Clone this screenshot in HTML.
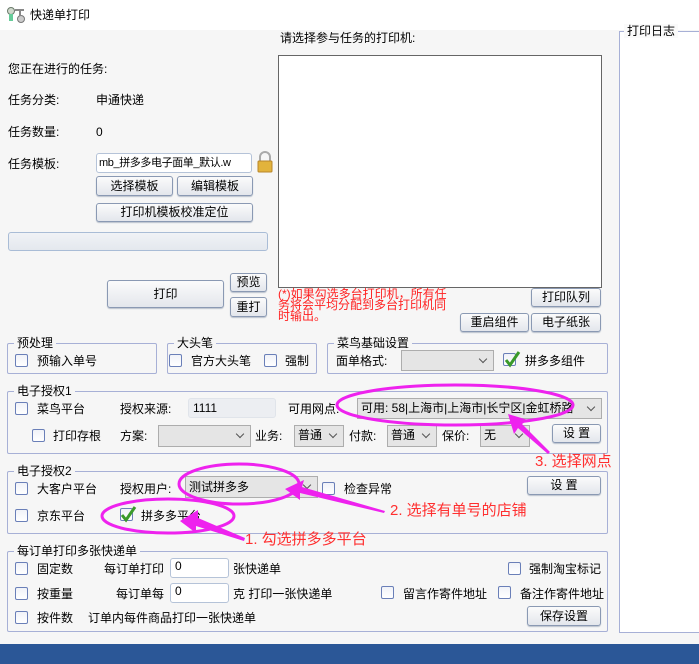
<!DOCTYPE html><html><head><meta charset="utf-8"><style>
*{box-sizing:border-box;margin:0;padding:0}
body{width:699px;height:664px;overflow:hidden;background:#f6f6f6;font-family:"Liberation Sans","Noto Sans CJK SC","WenQuanYi Zen Hei",sans-serif;font-size:12px;color:#000;position:relative}
.a{position:absolute;white-space:nowrap;line-height:14px}
.btn{position:absolute;border:1px solid #8a99b3;border-radius:3px;background:linear-gradient(#fbfbfb,#e3e6ec);text-align:center;font-size:12px;box-shadow:0 1px 1px #b8c0cc}
.gb{position:absolute;border:1px solid #a7b0d6;border-radius:2px}
.gb>span{position:absolute;top:-9px;left:6px;background:#f6f6f6;padding:0 3px;line-height:16px}
.cb{position:absolute;width:13px;height:13px;border:1px solid #6a7fb8;border-radius:2px;background:linear-gradient(#f0f2f8,#fff)}
.sel{position:absolute;border:1px solid #adadad;background:#e5e5e5;line-height:18px;padding-left:3px}
.sel:after{content:"";position:absolute;right:7px;top:5px;width:5px;height:5px;border-right:1px solid #555;border-bottom:1px solid #555;transform:rotate(45deg)}
.inp{position:absolute;background:#fff;border:1px solid #b5c3d8;border-radius:3px;padding-left:4px;line-height:16px}
.red{color:#ff2020}
</style></head><body>
<div style="position:absolute;left:0;top:0;width:699px;height:30px;background:#fff"></div>
<svg class="a" style="left:6px;top:6px" width="20" height="18"><circle cx="5" cy="5" r="3.5" fill="#cfd8cc" stroke="#6a7a6a"/><rect x="3" y="8" width="4" height="7" fill="#6c9"/><circle cx="15" cy="13" r="3.5" fill="#ccc" stroke="#777"/><rect x="9" y="3" width="9" height="2" fill="#888"/><rect x="13" y="3" width="2" height="7" fill="#888"/></svg>
<div class="a" style="left:30px;top:8px">快递单打印</div>
<div class="a" style="left:280px;top:31px">请选择参与任务的打印机:</div>
<div style="position:absolute;left:278px;top:55px;width:324px;height:233px;background:#fff;border:1px solid #666"></div>
<div class="a" style="left:8px;top:62px">您正在进行的任务:</div>
<div class="a" style="left:8px;top:93px">任务分类:</div><div class="a" style="left:96px;top:93px">申通快递</div>
<div class="a" style="left:8px;top:125px">任务数量:</div><div class="a" style="left:96px;top:125px">0</div>
<div class="a" style="left:8px;top:157px">任务模板:</div>
<div class="inp" style="left:96px;top:153px;width:156px;height:20px;line-height:18px;overflow:hidden;font-size:11px;letter-spacing:-0.4px;padding-left:2px">mb_拼多多电子面单_默认.w</div>
<svg class="a" style="left:256px;top:151px" width="18" height="22"><path d="M4 10V6a5 5 0 0 1 10 0v4" fill="none" stroke="#aaa" stroke-width="2"/><rect x="2" y="10" width="14" height="11" rx="1" fill="#e2b33c" stroke="#b8862a"/></svg>
<div class="btn" style="left:96px;top:176px;width:77px;height:20px;line-height:18px">选择模板</div>
<div class="btn" style="left:177px;top:176px;width:76px;height:20px;line-height:18px">编辑模板</div>
<div class="btn" style="left:96px;top:203px;width:157px;height:19px;line-height:17px">打印机模板校准定位</div>
<div style="position:absolute;left:8px;top:232px;width:260px;height:19px;border:1px solid #a9bcd6;border-radius:3px;background:linear-gradient(#f0f2f6,#e4e8ee)"></div>
<div class="btn" style="left:107px;top:280px;width:117px;height:28px;line-height:26px">打印</div>
<div class="btn" style="left:230px;top:273px;width:37px;height:19px;line-height:17px">预览</div>
<div class="btn" style="left:230px;top:297px;width:37px;height:20px;line-height:18px">重打</div>
<div class="a red" style="left:278px;top:289px;line-height:11px;font-size:12px">(*)如果勾选多台打印机，所有任<br>务将会平均分配到多台打印机同<br>时输出。</div>
<div class="btn" style="left:531px;top:288px;width:70px;height:19px;line-height:17px">打印队列</div>
<div class="btn" style="left:460px;top:313px;width:69px;height:19px;line-height:17px">重启组件</div>
<div class="btn" style="left:531px;top:313px;width:70px;height:19px;line-height:17px">电子纸张</div>

<div class="gb" style="left:7px;top:343px;width:150px;height:31px"><span>预处理</span></div>
<div class="cb" style="left:15px;top:354px"></div><div class="a" style="left:37px;top:354px">预输入单号</div>
<div class="gb" style="left:167px;top:343px;width:150px;height:31px"><span>大头笔</span></div>
<div class="cb" style="left:169px;top:354px"></div><div class="a" style="left:191px;top:354px">官方大头笔</div>
<div class="cb" style="left:264px;top:354px"></div><div class="a" style="left:285px;top:354px">强制</div>
<div class="gb" style="left:327px;top:343px;width:281px;height:31px"><span>菜鸟基础设置</span></div>
<div class="a" style="left:336px;top:354px">面单格式:</div>
<div class="sel" style="left:401px;top:350px;width:93px;height:21px"></div>
<div class="cb" style="left:503px;top:353px"></div>
<svg class="a" style="left:503px;top:350px" width="18" height="18"><path d="M3 10l4 5 9-13" fill="none" stroke="#3a9a2a" stroke-width="3"/></svg>
<div class="a" style="left:525px;top:354px">拼多多组件</div>

<div class="gb" style="left:7px;top:391px;width:601px;height:63px"><span>电子授权1</span></div>
<div class="cb" style="left:15px;top:402px"></div><div class="a" style="left:37px;top:402px">菜鸟平台</div>
<div class="a" style="left:120px;top:402px">授权来源:</div>
<div class="inp" style="left:188px;top:398px;width:88px;height:20px;line-height:18px;background:#eceef2;border-color:#e0e4ea">1111</div>
<div class="a" style="left:288px;top:402px">可用网点:</div>
<div class="sel" style="left:357px;top:398px;width:245px;height:21px;overflow:hidden;padding-right:18px">可用: 58|上海市|上海市|长宁区|金虹桥路</div>
<div class="cb" style="left:32px;top:429px"></div><div class="a" style="left:53px;top:429px">打印存根</div>
<div class="a" style="left:120px;top:429px">方案:</div>
<div class="sel" style="left:158px;top:425px;width:93px;height:22px"></div>
<div class="a" style="left:255px;top:429px">业务:</div>
<div class="sel" style="left:294px;top:425px;width:50px;height:22px">普通</div>
<div class="a" style="left:349px;top:429px">付款:</div>
<div class="sel" style="left:387px;top:425px;width:50px;height:22px">普通</div>
<div class="a" style="left:442px;top:429px">保价:</div>
<div class="sel" style="left:480px;top:425px;width:50px;height:22px">无</div>
<div class="btn" style="left:552px;top:424px;width:49px;height:19px;line-height:17px">设 置</div>

<div class="gb" style="left:7px;top:471px;width:601px;height:63px"><span>电子授权2</span></div>
<div class="cb" style="left:15px;top:482px"></div><div class="a" style="left:37px;top:482px">大客户平台</div>
<div class="a" style="left:120px;top:482px">授权用户:</div>
<div class="sel" style="left:185px;top:476px;width:133px;height:22px;line-height:20px">测试拼多多</div>
<div class="cb" style="left:322px;top:482px"></div><div class="a" style="left:344px;top:482px">检查异常</div>
<div class="btn" style="left:527px;top:476px;width:74px;height:19px;line-height:17px">设 置</div>
<div class="cb" style="left:15px;top:509px"></div><div class="a" style="left:37px;top:509px">京东平台</div>
<div class="cb" style="left:120px;top:508px"></div>
<svg class="a" style="left:119px;top:505px" width="18" height="18"><path d="M3 10l4 5 9-13" fill="none" stroke="#3a9a2a" stroke-width="3"/></svg>
<div class="a" style="left:141px;top:509px">拼多多平台</div>

<div class="gb" style="left:7px;top:551px;width:601px;height:81px"><span>每订单打印多张快递单</span></div>
<div class="cb" style="left:15px;top:562px"></div><div class="a" style="left:37px;top:562px">固定数</div>
<div class="a" style="left:104px;top:562px">每订单打印</div>
<div class="inp" style="left:170px;top:558px;width:59px;height:20px;line-height:14px">0</div>
<div class="a" style="left:233px;top:562px">张快递单</div>
<div class="cb" style="left:508px;top:562px"></div><div class="a" style="left:529px;top:562px">强制淘宝标记</div>
<div class="cb" style="left:15px;top:587px"></div><div class="a" style="left:37px;top:587px">按重量</div>
<div class="a" style="left:116px;top:587px">每订单每</div>
<div class="inp" style="left:170px;top:583px;width:59px;height:20px;line-height:14px">0</div>
<div class="a" style="left:233px;top:587px">克 打印一张快递单</div>
<div class="cb" style="left:381px;top:586px"></div><div class="a" style="left:403px;top:587px">留言作寄件地址</div>
<div class="cb" style="left:498px;top:586px"></div><div class="a" style="left:520px;top:587px">备注作寄件地址</div>
<div class="cb" style="left:15px;top:611px"></div><div class="a" style="left:37px;top:611px">按件数</div>
<div class="a" style="left:88px;top:611px">订单内每件商品打印一张快递单</div>
<div class="btn" style="left:527px;top:606px;width:74px;height:20px;line-height:18px">保存设置</div>

<div style="position:absolute;left:619px;top:31px;width:90px;height:602px;background:#fff;border:1px solid #a7b0d6"></div>
<div class="a" style="left:624px;top:24px;background:#fafafa;padding:0 3px">打印日志</div>
<div style="position:absolute;left:0;top:644px;width:699px;height:20px;background:#2b5797"></div>

<svg style="position:absolute;left:0;top:0" width="699" height="664">
<g fill="none" stroke="#ee22ee" stroke-width="3">
<ellipse cx="168" cy="516" rx="66" ry="17"/>
<ellipse cx="239" cy="484" rx="60" ry="20"/>
<ellipse cx="455" cy="405" rx="118" ry="20"/>
</g>
<g fill="#ee22ee">
<polygon points="180,521 198,510 198,518 245,538 244,541 196,526 196,533"/>
<polygon points="285,489 304,480 302,487 385,511 384,513 300,493 300,500"/>
<polygon points="508,414 528,420 522,424 550,452 548,454 518,428 514,434"/>
</g>
<g font-family="Liberation Sans,Noto Sans CJK SC,sans-serif" font-size="15" fill="#ff3030">
<text x="245" y="544">1. 勾选拼多多平台</text>
<text x="390" y="515">2. 选择有单号的店铺</text>
<text x="535" y="466">3. 选择网点</text>
</g>
</svg>
</body></html>
